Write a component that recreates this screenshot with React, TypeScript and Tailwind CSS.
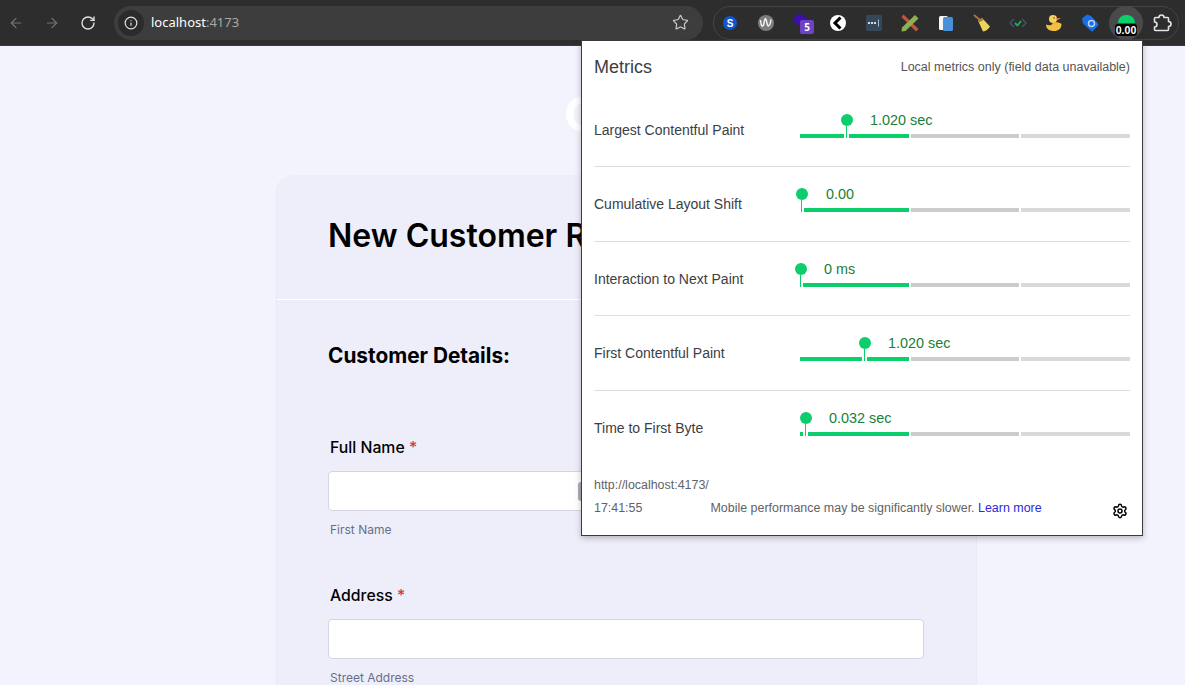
import { ArrowLeft, ArrowRight, RotateCw, Info, Star, Settings } from "lucide-react";

const metrics = [
  { label: "Largest Contentful Paint", value: "1.020 sec", marker: 47, text: 70 },
  { label: "Cumulative Layout Shift", value: "0.00", marker: 2, text: 26 },
  { label: "Interaction to Next Paint", value: "0 ms", marker: 1, text: 24 },
  { label: "First Contentful Paint", value: "1.020 sec", marker: 65, text: 88 },
  { label: "Time to First Byte", value: "0.032 sec", marker: 6, text: 29 },
];

function MetricRow({ m, last }: { m: (typeof metrics)[number]; last: boolean }) {
  return (
    <div className={`flex h-[74.5px] ${last ? "" : "border-b border-[#dedede]"}`}>
      <div className="w-[206px] pt-[29px] text-[14px] leading-[16px] text-[#3c4043]">{m.label}</div>
      <div className="relative w-[330px] pt-[41px]">
        <div className="flex h-[4px] gap-[2px]">
          <div className="w-[109px] bg-[#0cce6b]" />
          <div className="w-[108px] bg-[#cccccc]" />
          <div className="w-[109px] bg-[#d9d9d9]" />
        </div>
        <div className="absolute top-[21px] h-[24px] w-[12px] -translate-x-1/2" style={{ left: m.marker }}>
          <div className="h-[12px] w-[12px] rounded-full bg-[#0cce6b]" />
          <div className="ml-[3px] h-[12px] w-[5px] border-x-2 border-white bg-[#0cce6b]" />
        </div>
        <div className="absolute top-[19px] whitespace-nowrap text-[14.4px] leading-[16px] text-[#188038]" style={{ left: m.text }}>
          {m.value}
        </div>
      </div>
    </div>
  );
}

function Slot({ children }: { children: React.ReactNode }) {
  return <div className="flex h-[32px] w-[36px] shrink-0 items-center justify-center">{children}</div>;
}

function ExtensionIcons() {
  return (
    <>
      <Slot>
        <svg width="16" height="16" viewBox="0 0 16 16">
          <circle cx="8" cy="8" r="7" fill="#0b57d0" />
          <text x="8" y="11.500" textAnchor="middle" fontSize="10" fontWeight="700" fill="#fff" fontFamily="Liberation Sans">S</text>
        </svg>
      </Slot>
      <Slot>
        <svg width="18" height="18" viewBox="0 0 18 18">
          <circle cx="9" cy="9" r="8" fill="#7d7d7d" />
          <path d="M3.500 6c.5 7 2.500 8 3.500 3s1-5 2-3.500 1 8 3 6 1.500-4 2-6" fill="none" stroke="#f0f0f0" strokeWidth="1.500" />
        </svg>
      </Slot>
      <Slot>
        <div className="relative h-[22px] w-[22px] translate-x-[1px]">
          <svg width="16" height="14" viewBox="0 0 16 14" className="absolute left-0 top-[1px]">
            <path d="M7 0 16 6 8 14 0 7Z" fill="#3b0fa8" />
          </svg>
          <div className="absolute bottom-0 right-0 flex h-[14px] w-[14px] items-center justify-center rounded-[2px] bg-[#6f42c1] text-[10px] font-bold leading-none text-white">5</div>
        </div>
      </Slot>
      <Slot>
        <svg width="18" height="18" viewBox="0 0 18 18">
          <circle cx="9" cy="9" r="8" fill="#fff" />
          <path d="M11.500 3.500 6 9l5.500 5.500" fill="none" stroke="#000" strokeWidth="3" />
        </svg>
      </Slot>
      <Slot>
        <svg width="16" height="16" viewBox="0 0 16 16">
          <rect width="16" height="16" rx="1.500" fill="#35485a" />
          <circle cx="3" cy="8" r="1.100" fill="#fff" />
          <circle cx="6" cy="8" r="1.100" fill="#fff" />
          <circle cx="9" cy="8" r="1.100" fill="#fff" />
          <path d="M12.500 4.500v7" stroke="#9fb4c4" />
        </svg>
      </Slot>
      <Slot>
        <svg width="18" height="18" viewBox="0 0 18 18">
          <path d="M2.500 .500 17.500 15l-2.500 2.500L.500 3Z" fill="#c0573a" />
          <path d="M14 1l3.500 3.500L4.500 17 .500 17.500 1 13.500Z" fill="#8fb04e" />
        </svg>
      </Slot>
      <Slot>
        <svg width="14" height="16" viewBox="0 0 14 16">
          <rect x="0" y="1" width="9" height="14" rx="1.500" fill="#f4f6f8" />
          <rect x="4" y="2" width="10" height="14" rx="1.500" fill="#4a90d9" />
        </svg>
      </Slot>
      <Slot>
        <svg width="18" height="18" viewBox="0 0 18 18">
          <path d="M1 1l6 5" stroke="#a9743c" strokeWidth="2" />
          <path d="M5 6.500 9 4l8 8.500c-2 3-4 4.500-7 5Z" fill="#ecd35a" />
          <path d="M5 6.500 9 4l1.500 1.800-4 2.500Z" fill="#a5763c" />
        </svg>
      </Slot>
      <Slot>
        <svg width="18" height="12" viewBox="0 0 18 12">
          <path d="M5 2 1 6l4 4M13 2l4 4-4 4" fill="none" stroke="#3d5566" strokeWidth="1.500" />
          <path d="M6 6l2.500 2.500L12 4" fill="none" stroke="#17b26a" strokeWidth="1.800" />
        </svg>
      </Slot>
      <Slot>
        <svg width="18" height="18" viewBox="0 0 18 18">
          <circle cx="8" cy="5" r="4" fill="#f7d25c" />
          <path d="M1 10.500c3 1.500 6 1 7-2 3-.5 7 0 8.500 1.500 0 4.500-3 7-7.500 7S1 15 1 10.500Z" fill="#f2bf3f" />
          <path d="M11 4h5l-4 2.500Z" fill="#e8792f" />
          <circle cx="9" cy="4" r=".7" fill="#333" />
        </svg>
      </Slot>
      <Slot>
        <svg width="18" height="18" viewBox="0 0 18 18">
          <path d="M1 4.500 6 .5l4 1.500 7 7.500c.5.700.5 1.500 0 2L12 17c-.700.600-1.500.600-2 0L2 9.500Z" fill="#1a6fe0" />
          <circle cx="10.500" cy="9.500" r="3" fill="none" stroke="#b9d2f5" strokeWidth="1.500" />
        </svg>
      </Slot>
      <div className="relative ml-[1px] flex h-[34px] w-[34px] shrink-0 justify-center rounded-full bg-[#4a4a4a]">
        <div className="mt-[9px] h-[8px] w-[17px] rounded-t-full bg-[#0cce6b]" />
        <div className="absolute left-[6px] top-[18px] h-[12px] w-[22px] rounded-[3px] bg-black text-center font-['Liberation_Sans',sans-serif] text-[10.500px] font-bold leading-[12px] text-white">0.00</div>
      </div>
      <svg width="20" height="20" viewBox="0 0 20 20" className="ml-[9px] shrink-0" fill="none" stroke="#e3e3e3" strokeWidth="1.600">
        <path d="M3.500 4.500H7a2.500 2.500 0 0 1 5 0h3.500a1 1 0 0 1 1 1v3a2.500 2.500 0 0 1 0 5v3a1 1 0 0 1-1 1h-12a1 1 0 0 1-1-1V14a2.500 2.500 0 0 0 0-5V5.500a1 1 0 0 1 1-1Z" strokeLinejoin="round" />
      </svg>
    </>
  );
}

export default function App() {
  return (
    <div className="relative h-[685px] w-[1185px] overflow-hidden bg-[#f3f3fe] font-['Inter',sans-serif]">
      <header className="flex h-[46px] items-center border-b border-[#3a3a3a] bg-[#2d2d2d] font-['Noto_Sans',sans-serif]">
        <ArrowLeft className="ml-[8px] h-[16px] w-[16px] text-[#757575]" strokeWidth={1.800} />
        <ArrowRight className="ml-[20px] h-[16px] w-[16px] text-[#757575]" strokeWidth={1.800} />
        <RotateCw className="ml-[20px] h-[16px] w-[16px] text-[#e3e3e3]" strokeWidth={2} />
        <div className="ml-[18px] flex h-[34px] w-[589px] items-center rounded-full bg-[#3d3d3d] pl-[4px] pr-[14px]">
          <div className="flex h-[26px] w-[26px] items-center justify-center rounded-full bg-[#2b2b2b]">
            <Info className="h-[14px] w-[14px] text-[#e3e3e3]" strokeWidth={2} />
          </div>
          <div className="ml-[7px] pt-[1px] text-[13px] text-white">
            localhost<span className="text-[#a8a8a8]">:4173</span>
          </div>
          <Star className="ml-auto h-[17px] w-[17px] text-[#c7c7c7]" strokeWidth={1.700} />
        </div>
        <div className="ml-[10px] flex h-[34px] w-[466px] items-center rounded-full border border-[#444444]">
          <div className="ml-[-2px] flex items-center">
            <ExtensionIcons />
          </div>
        </div>
      </header>

      <div className="h-[129px] pl-[564px] pt-[39px]">
        <div className="text-[47px] font-bold leading-[58px] text-white">C</div>
      </div>

      <main className="ml-[276px] h-[600px] w-[701px] rounded-t-[18px] border-x border-[#e9e9f6] bg-[#eeeefb]">
        <div className="border-b border-white pb-[42px] pl-[51px] pt-[40px]">
          <h1 className="whitespace-nowrap text-[32px] font-semibold leading-[42px] text-black">New Customer Registration</h1>
        </div>
        <section className="px-[51px] pt-[44px]">
          <h2 className="text-[20.800px] font-bold leading-[24px] text-black">Customer Details:</h2>
          <div className="pt-[70px]">
            <label className="ml-[2px] block text-[15.800px] font-medium leading-[20px] text-black">
              Full Name <span className="text-[#c93a3a]">*</span>
            </label>
            <div className="mt-[13px] flex gap-[16px]">
              <div className="relative h-[40px] w-[290px] rounded-[4px] border border-[#d4d4e4] bg-white">
                <div className="absolute left-[249px] top-[10px] h-[19px] w-[8px] rounded-l-[3px] bg-[#a9adb3]" />
              </div>
            </div>
            <p className="ml-[2px] mt-[11px] text-[12px] leading-[16px] text-[#667085]">First Name</p>
          </div>
          <div className="pt-[48px]">
            <label className="ml-[2px] block text-[15.800px] font-medium leading-[20px] text-black">
              Address <span className="text-[#c93a3a]">*</span>
            </label>
            <div className="mt-[13px] h-[40px] w-[596px] rounded-[4px] border border-[#d4d4e4] bg-white" />
            <p className="ml-[2px] mt-[11px] text-[12px] leading-[16px] text-[#667085]">Street Address</p>
          </div>
        </section>
      </main>

      <aside className="absolute left-[581px] top-[40px] h-[496px] w-[562px] border border-[#3b3b3f] bg-white px-[12px] font-['Liberation_Sans',sans-serif] shadow-[0_2px_6px_rgba(60,64,67,0.35)]">
        <div className="flex h-[51.500px] items-start justify-between pt-[16px]">
          <div className="text-[18px] leading-[21px] text-[#3c4043]">Metrics</div>
          <div className="pt-[3px] text-[12.500px] leading-[14px] text-[#555555]">Local metrics only (field data unavailable)</div>
        </div>
        {metrics.map((m, i) => (
          <MetricRow key={m.label} m={m} last={i === metrics.length - 1} />
        ))}
        <div className="text-[12.450px] leading-[14px] text-[#5f6368]">
          <div className="mt-[13px]">http://localhost:4173/</div>
          <div className="mt-[9px] flex items-start">
            <span className="w-[116.500px]">17:41:55</span>
            <span>
              Mobile performance may be significantly slower. <span className="text-[#2a2ae0]">Learn more</span>
            </span>
            <Settings className="ml-auto mr-[2px] mt-[2px] h-[16px] w-[16px] text-black" strokeWidth={2.200} />
          </div>
        </div>
      </aside>
    </div>
  );
}
